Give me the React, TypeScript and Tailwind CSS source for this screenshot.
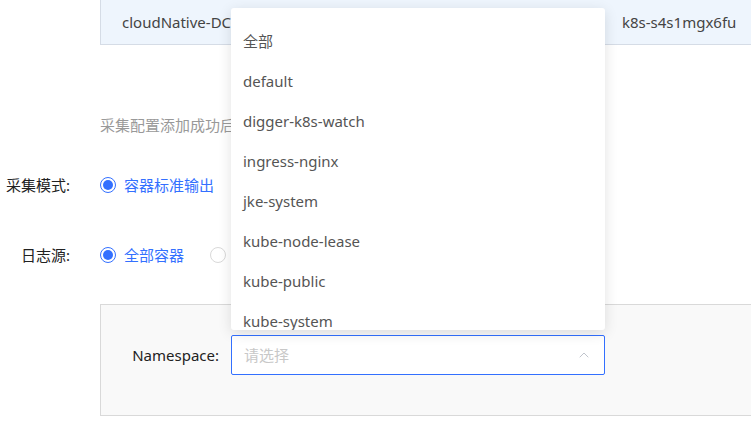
import { ChevronUp } from 'lucide-react';

const namespaces = [
  '全部',
  'default',
  'digger-k8s-watch',
  'ingress-nginx',
  'jke-system',
  'kube-node-lease',
  'kube-public',
  'kube-system',
  'monitoring',
];

function Radio({ checked, label }: { checked?: boolean; label?: string }) {
  return (
    <label className="flex items-center gap-2">
      <span
        className={
          checked
            ? 'w-4 h-4 rounded-full border border-[#3370ff] flex items-center justify-center bg-white'
            : 'w-4 h-4 rounded-full border border-[#d9d9d9] bg-white'
        }
      >
        {checked && <span className="w-[10px] h-[10px] rounded-full bg-[#3370ff]" />}
      </span>
      {label && <span className="text-[#3370ff]">{label}</span>}
    </label>
  );
}

export default function App() {
  return (
    <div
      className="relative w-[751px] h-[426px] overflow-hidden bg-white text-[15px] text-[#333]"
      style={{ fontFamily: '"Noto Sans", "Noto Sans CJK SC", sans-serif' }}
    >
      {/* cluster info bar */}
      <div className="ml-[100px] h-[45px] flex items-center bg-[#eef5fd] border-l border-b border-[#d5dce6] text-[#444]">
        <div className="w-[500px] pl-[21px]">cloudNative-DC-prod</div>
        <div className="pl-[21px]">k8s-s4s1mgx6fu</div>
      </div>

      <p className="ml-[100px] mt-[69px] leading-[22px] text-[#999]">
        采集配置添加成功后，将自动采集容器日志
      </p>

      <div className="mt-[37px] flex items-center h-6">
        <div className="w-[70px] text-right text-[#222]">采集模式:</div>
        <div className="ml-[30px]">
          <Radio checked label="容器标准输出" />
        </div>
      </div>

      <div className="mt-[46px] flex items-center h-6">
        <div className="w-[70px] text-right text-[#222]">日志源:</div>
        <div className="ml-[30px] flex items-center gap-[26px]">
          <Radio checked label="全部容器" />
          <Radio label="指定容器" />
        </div>
      </div>

      <div className="ml-[100px] mt-[37px] h-[112px] bg-[#f9f9f9] border border-r-0 border-[#d9d9d9] pt-[30px]">
        <div className="flex items-center">
          <div className="w-[118px] text-right text-[#222]">Namespace:</div>
          <div className="ml-[12px] w-[374px] h-10 bg-white border border-[#3370ff] rounded-[2px] flex items-center justify-between pl-[12px] pr-[12px]">
            <span className="text-[#c8c8c8]">请选择</span>
            <ChevronUp className="w-4 h-4 text-[#c0c4cc]" strokeWidth={1.5} />
          </div>
        </div>
      </div>

      {/* dropdown */}
      <div className="absolute left-[231px] top-[8px] w-[374px] h-[322px] bg-white rounded-[3px] shadow-[0_3px_14px_rgba(0,0,0,0.12)] overflow-hidden">
        <ul className="pt-[13px]">
          {namespaces.map((ns) => (
            <li key={ns} className="h-10 flex items-center px-[12px] text-[#555]">
              {ns}
            </li>
          ))}
        </ul>
      </div>
    </div>
  );
}
